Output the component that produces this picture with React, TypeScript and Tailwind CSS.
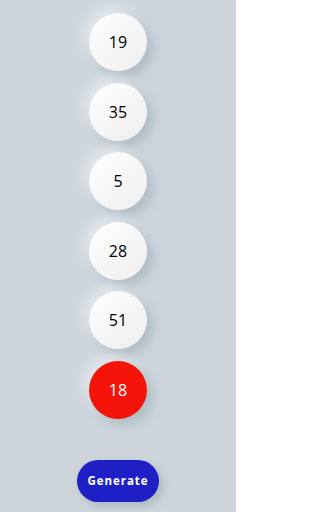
const numbers = [19, 35, 5, 28, 51];
const bonus = 18;

const Ball = ({ value, red }: { value: number; red?: boolean }) => (
  <div
    className={
      red
        ? "flex h-[58px] w-[58px] items-center justify-center rounded-full bg-[#f5140a] text-[16px] text-white shadow-[6px_6px_12px_rgba(140,155,168,0.45),-6px_-6px_12px_rgba(240,244,247,0.6)]"
        : "flex h-[58px] w-[58px] items-center justify-center rounded-full bg-gradient-to-br from-[#ffffff] to-[#eeeeef] text-[16px] text-black shadow-[6px_6px_12px_rgba(140,155,168,0.45),-6px_-6px_12px_rgba(240,244,247,0.6)]"
    }
  >
    {value}
  </div>
);

export default function App() {
  return (
    <div
      className="flex h-[512px] w-[236px] flex-col items-center bg-[#ced6dc] pt-[13px]"
      style={{ fontFamily: '"Open Sans", "Liberation Sans", sans-serif' }}
    >
      <div className="flex flex-col items-center gap-[11.6px]">
        {numbers.map((n) => (
          <Ball key={n} value={n} />
        ))}
        <Ball value={bonus} red />
      </div>
      <button className="mt-[41px] h-[42px] w-[82px] rounded-full bg-[#1f1fc6] text-[11.5px] font-bold tracking-[0.08em] text-white shadow-[4px_4px_10px_rgba(140,155,168,0.5)]">
        Generate
      </button>
    </div>
  );
}
